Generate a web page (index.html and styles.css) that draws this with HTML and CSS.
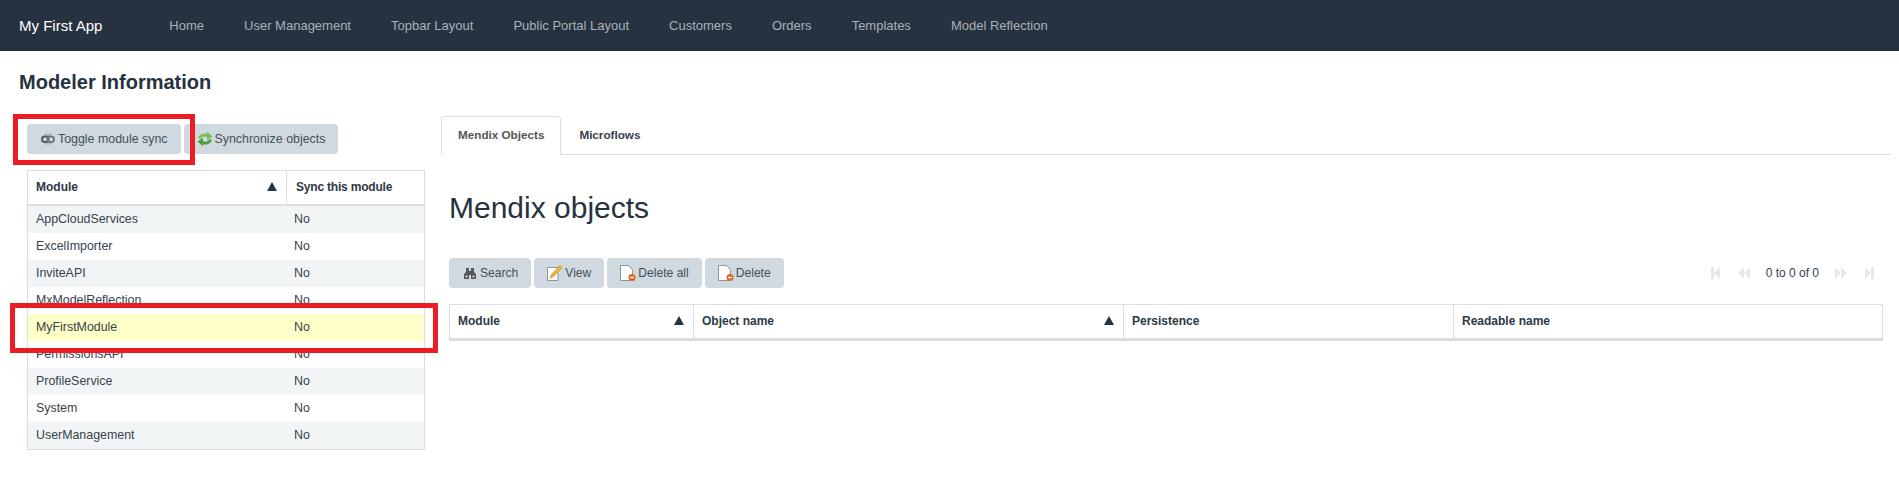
FILE: index.html
```html
<!DOCTYPE html>
<html lang="en">
<head>
  <meta charset="UTF-8">
  <title>Modeler Information</title>
  <link rel="stylesheet" href="styles.css">
</head>
<body>
  <nav class="topbar">
    <a class="brand" href="#">My First App</a>
    <a href="#">Home</a>
    <a href="#">User Management</a>
    <a href="#">Topbar Layout</a>
    <a href="#">Public Portal Layout</a>
    <a href="#">Customers</a>
    <a href="#">Orders</a>
    <a href="#">Templates</a>
    <a href="#">Model Reflection</a>
  </nav>

  <h1 class="page-title">Modeler Information</h1>

  <div class="columns">
    <section class="left">
      <div class="toolbar">
        <button class="btn">
          <svg class="ico" viewBox="0 0 16 18"><path d="M8 3v4M5 3.500l1.500 3M11 3.500l-1.500 3M8 15v-4M5 14.500l1.500-3M11 14.500l-1.500-3" stroke="#6f9fe6" stroke-width="1" fill="none"/><rect x="2" y="6.500" width="6.500" height="5.500" rx="2.700" fill="none" stroke="#55595d" stroke-width="1.900"/><rect x="7.500" y="6.500" width="6.500" height="5.500" rx="2.700" fill="none" stroke="#6d7276" stroke-width="1.900"/></svg>
          Toggle module sync
        </button>
        <button class="btn">
          <svg class="ico" viewBox="0 0 16 18"><path d="M2.500 8.500C3 5.500 6.500 4 11 5.500" fill="none" stroke="#74bd58" stroke-width="3"/><path d="M15.500 6.500L10 1.800v8.500z" fill="#74bd58"/><path d="M13.500 9.500C13 12.500 9.500 14 5 12.500" fill="none" stroke="#4f9d3e" stroke-width="3"/><path d="M.5 11.500L6 16.200V7.700z" fill="#4f9d3e"/></svg>
          Synchronize objects
        </button>
      </div>
      <table class="grid">
        <colgroup><col class="col-module"><col></colgroup>
        <thead>
          <tr><th class="sorted">Module</th><th>Sync this module</th></tr>
        </thead>
        <tbody>
          <tr><td>AppCloudServices</td><td>No</td></tr>
          <tr><td>ExcelImporter</td><td>No</td></tr>
          <tr><td>InviteAPI</td><td>No</td></tr>
          <tr><td>MxModelReflection</td><td>No</td></tr>
          <tr class="selected"><td>MyFirstModule</td><td>No</td></tr>
          <tr><td>PermissionsAPI</td><td>No</td></tr>
          <tr><td>ProfileService</td><td>No</td></tr>
          <tr><td>System</td><td>No</td></tr>
          <tr><td>UserManagement</td><td>No</td></tr>
        </tbody>
      </table>
    </section>

    <section class="right">
      <div class="tabs">
        <a class="tab active" href="#">Mendix Objects</a>
        <a class="tab" href="#">Microflows</a>
      </div>
      <div class="tab-body">
        <h2>Mendix objects</h2>
        <div class="toolbar">
          <button class="btn">
            <svg class="ico" viewBox="0 0 16 18"><path d="M4 4h3v3h2V4h3v4l2 2v5H9v-4H7v4H2v-5l2-2z" fill="#54595d"/><path d="M3.500 11.500h2v2h-2zM10.500 11.500h2v2h-2z" fill="#c9ced2"/></svg>
            Search
          </button>
          <button class="btn">
            <svg class="ico" viewBox="0 0 16 18"><path d="M.5 3.500h10.500v13H.5z" fill="#fff" stroke="#8f9498"/><path d="M13 1.500l2.300 2.300L6.500 12.500 3 14.500l1.200-3.800z" fill="#eeb33f" stroke="#c98a1e" stroke-width=".6"/></svg>
            View
          </button>
          <button class="btn">
            <svg class="ico" viewBox="0 0 16 18"><path d="M.5 1.500h8l4 4v11H.5z" fill="#fff" stroke="#8f9498"/><circle cx="12" cy="13.500" r="3.500" fill="#e0641c"/><path d="M10 13.500h4" stroke="#fff" stroke-width="1.400"/></svg>
            Delete all
          </button>
          <button class="btn">
            <svg class="ico" viewBox="0 0 16 18"><path d="M.5 1.500h8l4 4v11H.5z" fill="#fff" stroke="#8f9498"/><circle cx="12" cy="13.500" r="3.500" fill="#e0641c"/><path d="M10 13.500h4" stroke="#fff" stroke-width="1.400"/></svg>
            Delete
          </button>
          <div class="pager">
            <svg class="pg" viewBox="0 0 9 12"><path d="M0 0h3v12H0zM9 0v12L3 6z"/></svg>
            <svg class="pg pg-wide" viewBox="0 0 12 12"><path d="M6 0v12L0 6zM12 0v12L6 6z"/></svg>
            <span class="pager-text">0 to 0 of 0</span>
            <svg class="pg pg-wide" viewBox="0 0 12 12"><path d="M0 0v12l6-6zM6 0v12l6-6z"/></svg>
            <svg class="pg" viewBox="0 0 9 12"><path d="M0 0v12l6-6zM6 0h3v12H6z"/></svg>
          </div>
        </div>
        <table class="grid grid-objects">
          <colgroup><col class="c1"><col class="c2"><col class="c3"><col></colgroup>
          <thead>
            <tr><th class="sorted">Module</th><th class="sorted">Object name</th><th>Persistence</th><th>Readable name</th></tr>
          </thead>
        </table>
      </div>
    </section>
  </div>

  <div class="mark mark-toggle"></div>
  <div class="mark mark-row"></div>
</body>
</html>
```

FILE: styles.css
```css
body {
  margin: 0;
  font-family: "Liberation Sans", Arial, sans-serif;
  font-size: 12.4px;
  color: #36424e;
  background-color: #fff;
}
.topbar {
  display: flex;
  align-items: center;
  height: 51px;
  padding-left: 19px;
  background-color: #263240;
  box-sizing: border-box;
}
.topbar a {
  margin-right: 40px;
  font-size: 13px;
  color: #a9b1b9;
  text-decoration: none;
}
.topbar .brand {
  margin-right: 67px;
  font-size: 15px;
  color: #fff;
}
.page-title {
  height: 65px;
  margin: 0;
  padding: 20px 0 0 19px;
  box-sizing: border-box;
  font-size: 20px;
  line-height: 23px;
  color: #263240;
}
.columns {
  display: flex;
}
.left {
  width: 398px;
  margin-left: 27px;
  padding-top: 8px;
}
.right {
  width: 1450px;
  margin-left: 16px;
}
.toolbar {
  display: flex;
  gap: 3px;
}
.btn {
  display: flex;
  align-items: center;
  gap: 2px;
  height: 30px;
  padding: 0 13px;
  border: none;
  border-radius: 4px;
  background-color: #d0d9df;
  font-family: inherit;
  font-size: 12.4px;
  color: #45505b;
  white-space: nowrap;
}
.tab-body .btn {
  font-size: 12.1px;
}
.ico {
  width: 16px;
  height: 18px;
  flex: none;
}
.grid {
  width: 100%;
  border-collapse: separate;
  border-spacing: 0;
  table-layout: fixed;
  border: 1px solid #ddd;
}
.left .grid {
  margin-top: 16px;
}
.col-module {
  width: 259px;
}
.grid th {
  position: relative;
  height: 31px;
  padding: 0 8px 2px;
  border-right: 1px solid #ddd;
  border-bottom: 2px solid #ddd;
  font-size: 12px;
  text-align: left;
  color: #2d3945;
}
.grid th:last-child {
  border-right: none;
}
.grid th.sorted::after {
  content: "";
  position: absolute;
  right: 9px;
  top: 11px;
  border-left: 5px solid transparent;
  border-right: 5px solid transparent;
  border-bottom: 9px solid #263240;
}
.grid td {
  height: 25px;
  padding: 0 8px 2px;
}
.left .grid th:last-child {
  padding-left: 9px;
  letter-spacing: -0.2px;
}
.left .grid td:last-child {
  padding-left: 7px;
}
.grid tbody tr:nth-child(odd) td {
  background-color: #f2f5f6;
}
.grid tbody tr.selected td {
  background-color: #ffffc8;
}
.tabs {
  display: flex;
  height: 39px;
  border-bottom: 1px solid #ddd;
  box-sizing: border-box;
}
.tab {
  height: 38px;
  margin-right: 1px;
  padding: 0 16px;
  border: 1px solid transparent;
  box-sizing: border-box;
  font-size: 11.7px;
  font-weight: bold;
  line-height: 36px;
  color: #36424e;
  text-decoration: none;
}
.tab.active {
  height: 39px;
  border-color: #ddd;
  border-bottom-color: #fff;
  border-radius: 4px 4px 0 0;
  color: #555;
}
.tab-body {
  padding: 0 8px;
}
.tab-body h2 {
  height: 103px;
  margin: 0;
  padding-top: 35px;
  box-sizing: border-box;
  font-size: 30px;
  font-weight: normal;
  line-height: 36px;
  color: #263240;
}
.pager {
  display: flex;
  align-items: center;
  margin-left: auto;
}
.pg {
  width: 9px;
  height: 12px;
  margin: 0 9px;
  fill: #e8e8e8;
}
.pg-wide {
  width: 12px;
}
.pager-text {
  margin: 0 7px;
  font-size: 12px;
}
.grid-objects {
  margin-top: 16px;
}
.c1 {
  width: 244px;
}
.c2 {
  width: 430px;
}
.c3 {
  width: 330px;
}
.mark {
  position: absolute;
  border: 5px solid #ed1c24;
  box-sizing: border-box;
}
.mark-toggle {
  left: 13px;
  top: 114px;
  width: 182px;
  height: 51px;
}
.mark-row {
  left: 10px;
  top: 303px;
  width: 428px;
  height: 50px;
}
```
